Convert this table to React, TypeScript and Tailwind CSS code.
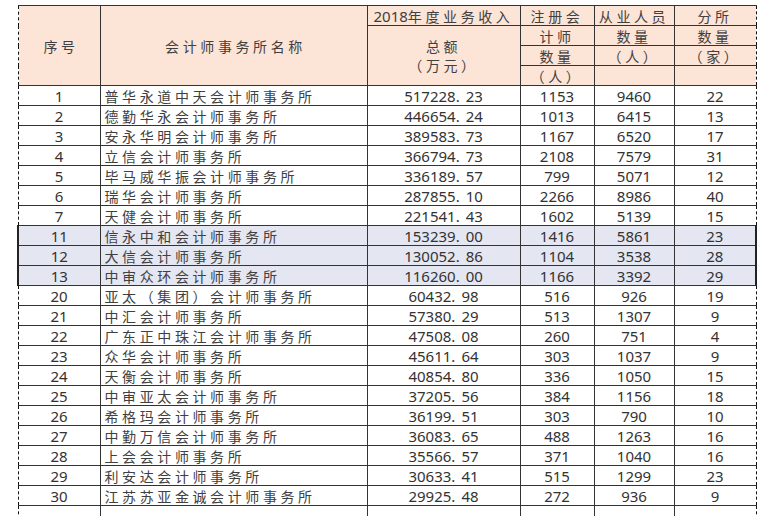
import React from "react";

type Row = [string, string, string, string, string, string];

const rows: Row[] = [
  ["1", "普华永道中天会计师事务所", "517228.23", "1153", "9460", "22"],
  ["2", "德勤华永会计师事务所", "446654.24", "1013", "6415", "13"],
  ["3", "安永华明会计师事务所", "389583.73", "1167", "6520", "17"],
  ["4", "立信会计师事务所", "366794.73", "2108", "7579", "31"],
  ["5", "毕马威华振会计师事务所", "336189.57", "799", "5071", "12"],
  ["6", "瑞华会计师事务所", "287855.10", "2266", "8986", "40"],
  ["7", "天健会计师事务所", "221541.43", "1602", "5139", "15"],
  ["11", "信永中和会计师事务所", "153239.00", "1416", "5861", "23"],
  ["12", "大信会计师事务所", "130052.86", "1104", "3538", "28"],
  ["13", "中审众环会计师事务所", "116260.00", "1166", "3392", "29"],
  ["20", "亚太（集团）会计师事务所", "60432.98", "516", "926", "19"],
  ["21", "中汇会计师事务所", "57380.29", "513", "1307", "9"],
  ["22", "广东正中珠江会计师事务所", "47508.08", "260", "751", "4"],
  ["23", "众华会计师事务所", "45611.64", "303", "1037", "9"],
  ["24", "天衡会计师事务所", "40854.80", "336", "1050", "15"],
  ["25", "中审亚太会计师事务所", "37205.56", "384", "1156", "18"],
  ["26", "希格玛会计师事务所", "36199.51", "303", "790", "10"],
  ["27", "中勤万信会计师事务所", "36083.65", "488", "1263", "16"],
  ["28", "上会会计师事务所", "35566.57", "371", "1040", "16"],
  ["29", "利安达会计师事务所", "30633.41", "515", "1299", "23"],
  ["30", "江苏苏亚金诚会计师事务所", "29925.48", "272", "936", "9"],
];

const highlighted = ["11", "12", "13"];

const cjk = "font-['Noto_Sans_CJK_SC',sans-serif] text-[14px] tracking-[3.6px] text-[#404040]";
const num = "font-['Noto_Sans','Noto_Sans_CJK_SC',sans-serif] text-[15px] text-[#333]";
const cell = "h-[20px] p-0 border border-[#333] leading-[18px] whitespace-nowrap overflow-hidden";
const dashL = "![border-left-style:dashed] border-l-[#111]";
const dashR = "![border-right-style:dashed] border-r-[#111]";

// 金额里的小数点后面留一点空
function Amount({ v }: { v: string }) {
  const [a, b] = v.split(".");
  return (
    <>
      {a}
      <span className="mr-[6px]">.</span>
      {b}
    </>
  );
}

export default function App() {
  return (
    <div className="h-[516px] w-[766px] overflow-hidden bg-white">
      <table className="ml-[17px] mt-[5px] w-[738px] table-fixed border-collapse">
        <colgroup>
          <col className="w-[82px]" />
          <col className="w-[267px]" />
          <col className="w-[153px]" />
          <col className="w-[74px]" />
          <col className="w-[80px]" />
          <col className="w-[82px]" />
        </colgroup>
        <thead className="bg-[#fce4d6]">
          <tr className="h-[20px]">
            <td rowSpan={4} className={`${cell} ${dashL} text-center ${cjk} pl-[4px]`}>
              序号
            </td>
            <td rowSpan={4} className={`${cell} text-center ${cjk} pl-[4px]`}>
              会计师事务所名称
            </td>
            <td className={`${cell} text-center ${cjk} tracking-[2.6px]`}>
              <span className="font-['Noto_Sans',sans-serif] tracking-normal text-[15px]">2018</span>年度业务收入
            </td>
            <td className={`${cell} text-center ${cjk}`}>注册会</td>
            <td className={`${cell} text-center ${cjk}`}>从业人员</td>
            <td className={`${cell} ${dashR} text-center ${cjk}`}>分所</td>
          </tr>
          <tr className="h-[20px]">
            <td rowSpan={3} className={`${cell} text-center align-middle ${cjk} text-[13px] leading-[19px] pt-[1px]`}>
              <div>总额</div>
              <div>（万元）</div>
            </td>
            <td className={`${cell} text-center ${cjk}`}>计师</td>
            <td className={`${cell} text-center ${cjk}`}>数量</td>
            <td className={`${cell} ${dashR} text-center ${cjk}`}>数量</td>
          </tr>
          <tr className="h-[20px]">
            <td className={`${cell} text-center ${cjk}`}>数量</td>
            <td className={`${cell} text-center ${cjk}`}>（人）</td>
            <td className={`${cell} ${dashR} text-center ${cjk}`}>（家）</td>
          </tr>
          <tr className="h-[20px]">
            <td className={`${cell} text-center ${cjk}`}>（人）</td>
            <td className={cell}></td>
            <td className={`${cell} ${dashR}`}></td>
          </tr>
        </thead>
        <tbody>
          {rows.map((r) => {
            const hl = highlighted.includes(r[0]);
            return (
              <tr key={r[0]} className={`h-[20px] ${hl ? "bg-[#e4e6f2]" : "bg-white"}`}>
                <td
                  className={`${cell} text-center ${num} ${
                    hl ? "border-l-2 border-l-[#222]" : dashL
                  }`}
                >
                  {r[0]}
                </td>
                <td className={`${cell} pl-[4px] ${cjk}`}>{r[1]}</td>
                <td className={`${cell} text-center ${num}`}>
                  <Amount v={r[2]} />
                </td>
                <td className={`${cell} text-center ${num}`}>{r[3]}</td>
                <td className={`${cell} text-center ${num}`}>{r[4]}</td>
                <td
                  className={`${cell} text-center ${num} ${
                    hl ? "border-r-2 border-r-[#222]" : dashR
                  }`}
                >
                  {r[5]}
                </td>
              </tr>
            );
          })}
          <tr className="h-[20px]">
            <td className={`${cell} ${dashL}`}></td>
            <td className={cell}></td>
            <td className={cell}></td>
            <td className={cell}></td>
            <td className={cell}></td>
            <td className={`${cell} ${dashR}`}></td>
          </tr>
        </tbody>
      </table>
    </div>
  );
}
